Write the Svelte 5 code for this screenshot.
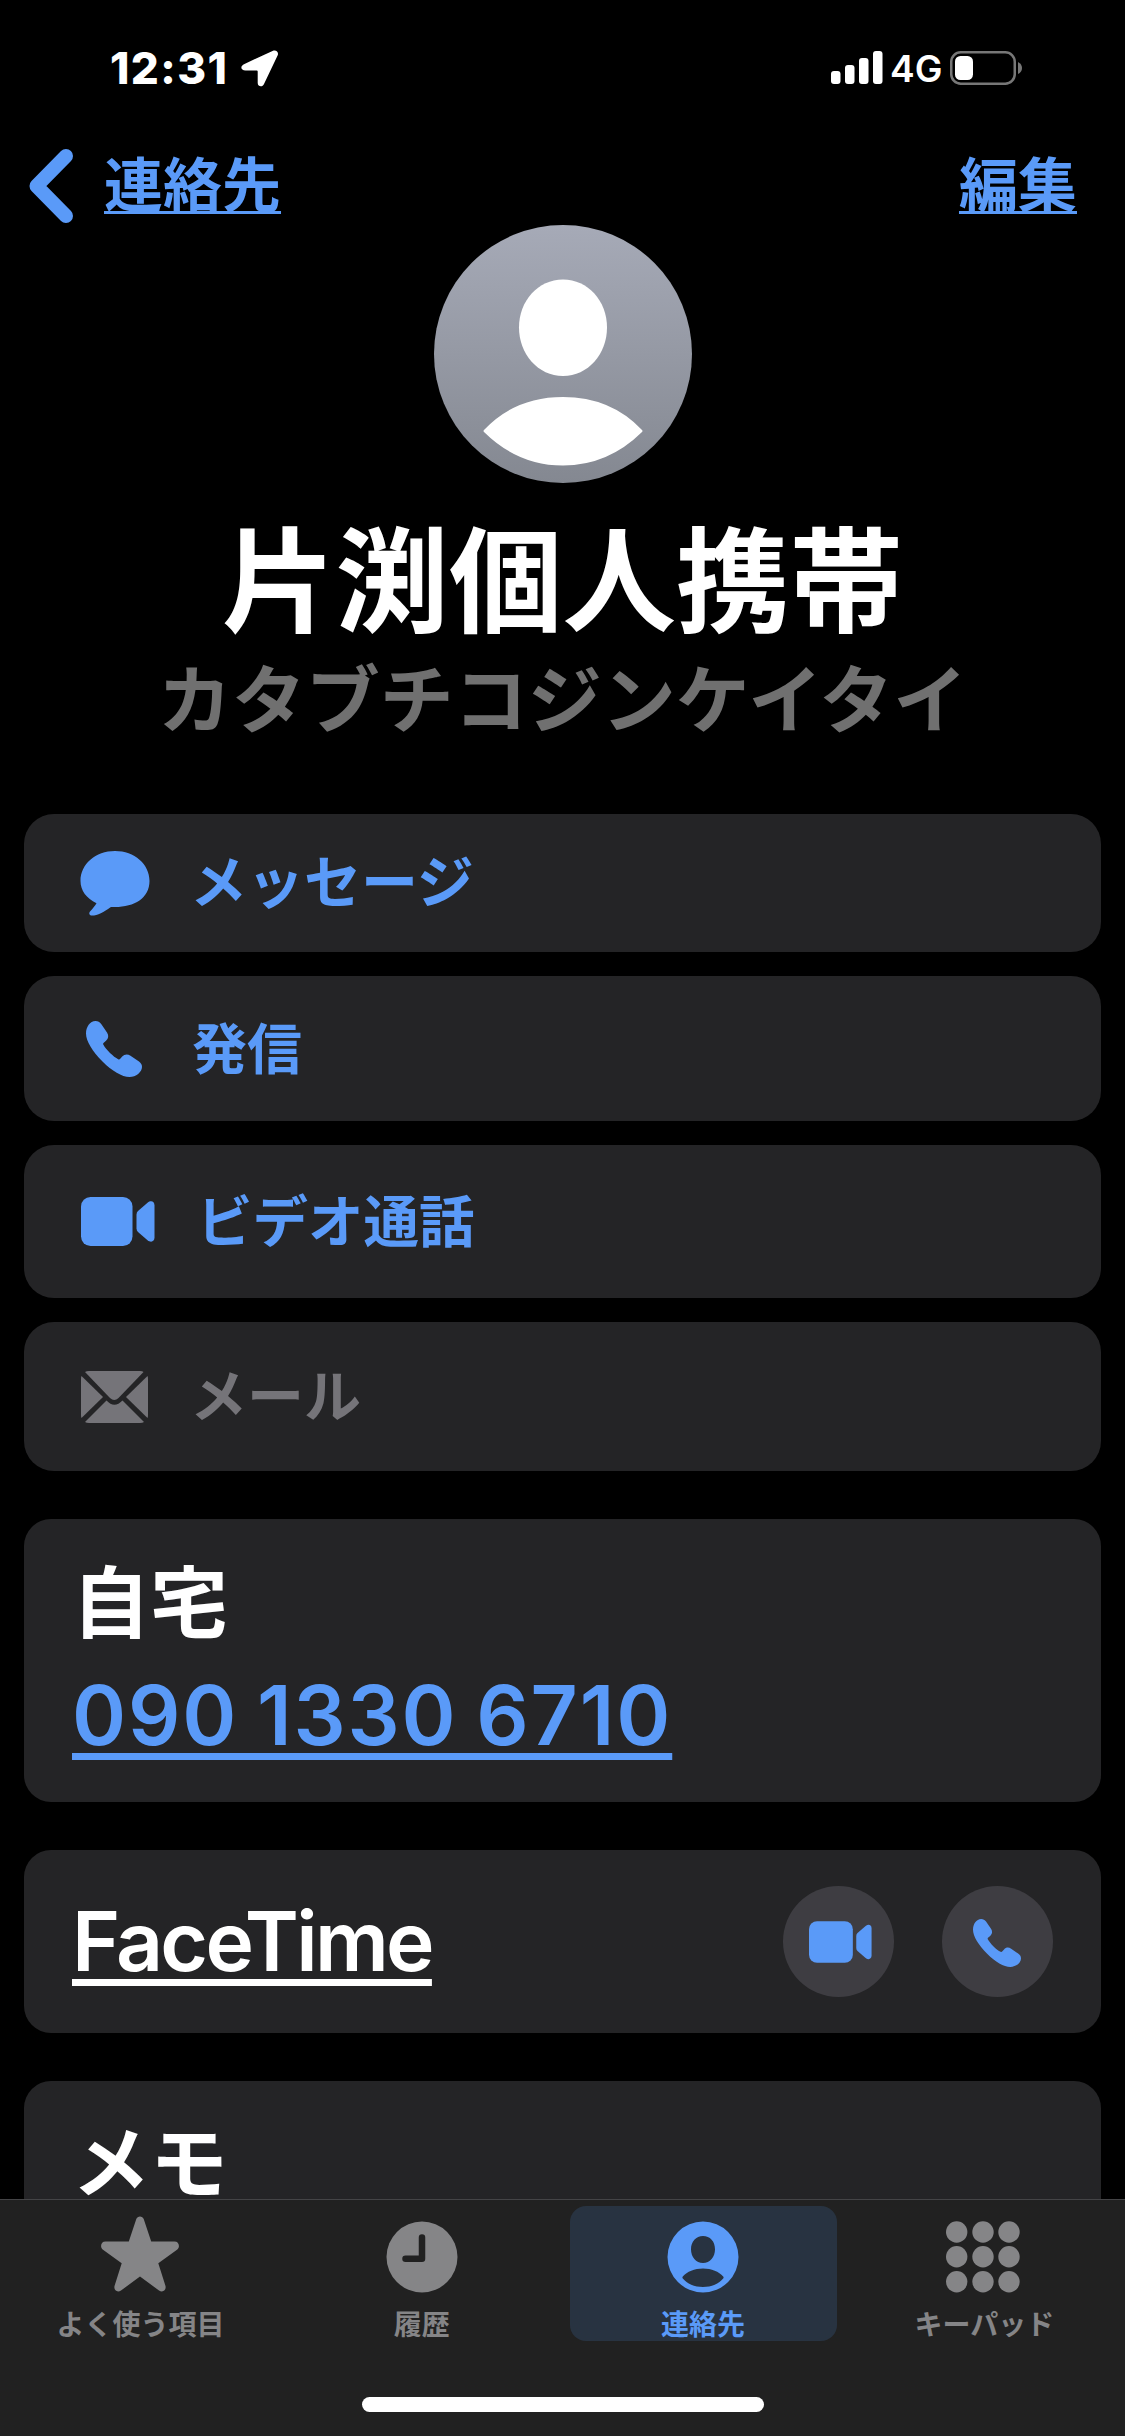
<script lang="ts">
  type IconName = 'message' | 'phone' | 'video' | 'mail' | 'star' | 'clock' | 'person' | 'keypad';

  interface Action {
    icon: IconName;
    label: string;
    disabled?: boolean;
  }

  interface Tab {
    icon: IconName;
    label: string;
  }

  const actions: Action[] = [
    { icon: 'message', label: 'メッセージ' },
    { icon: 'phone', label: '発信' },
    { icon: 'video', label: 'ビデオ通話' },
    { icon: 'mail', label: 'メール', disabled: true },
  ];

  const tabs: Tab[] = [
    { icon: 'star', label: 'よく使う項目' },
    { icon: 'clock', label: '履歴' },
    { icon: 'person', label: '連絡先' },
    { icon: 'keypad', label: 'キーパッド' },
  ];

  let current = $state('連絡先');
</script>

{#snippet icon(name: IconName)}
  {#if name === 'message'}
    <svg class="icon message" viewBox="0 0 70 65" aria-hidden="true">
      <path
        d="M35 0C54.500 0 69.500 13 69.500 30S54.500 56 35 56C33 56 31.500 56 30.500 56.200C24 61 17.500 64.500 12 64.500C9.500 64.500 8.500 62.500 10 60.500C12.500 57.500 15 55 16.500 52.200C6.500 47.500 0.500 39.500 0.500 30C0.500 13 15.500 0 35 0Z"
      />
    </svg>
  {:else if name === 'phone'}
    <svg class="icon phone" viewBox="0 0 56 56" aria-hidden="true">
      <path
        d="M9.500 0C12 0 13.800 1 15.200 3L21 11.500C23 14.500 22.500 17.500 20 19.800L17.500 22C17 22.500 17 23 17.400 23.800C20 28.500 27.500 36 32.200 38.200C33 38.600 33.500 38.500 34 38L36.200 35.600C38.500 33 41.500 32.700 44.500 34.700L53 40.600C55 42 56 43.800 56 46C56 51 50 56 43.500 56C36 56 26 50 16.500 40.500C6.500 30.500 0 20 0 12.500C0 6 4 0 9.500 0Z"
      />
    </svg>
  {:else if name === 'video'}
    <svg class="icon video" viewBox="0 0 74 49" aria-hidden="true">
      <rect width="51.500" height="49" rx="9.500" />
      <path
        d="M55.500 17.500Q55.500 15.300 57 14L66.500 5.800C70 3 73.500 4.500 73.500 8.500V40.500C73.500 44.500 70 46 66.500 43.200L57 35Q55.500 33.700 55.500 31.500Z"
      />
    </svg>
  {:else if name === 'mail'}
    <svg class="icon mail" viewBox="0 0 67 52" aria-hidden="true">
      <path d="M4 1Q5.500 0 8 0H59Q61.500 0 62.500 1L37.500 27Q33.300 31 29 27Z" />
      <path d="M0.500 5L22 26L0.500 47Q0 46 0 44V8Q0 6 0.500 5Z" />
      <path d="M66.500 5L45 26L66.500 47Q67 46 67 44V8Q67 6 66.500 5Z" />
      <path d="M4 51L25.500 29.500Q33.300 38 41.500 29.500L63 51Q61.500 52 59 52H8Q5.500 52 4 51Z" />
    </svg>
  {:else if name === 'star'}
    <svg class="icon star" viewBox="0 0 78 76" aria-hidden="true">
      <path
        d="M35.300 3C36.500-0.500 41.500-0.500 42.700 3L50.200 25.500H73.500C78 25.500 79.500 31 76 33.800L57.300 47.200L64.500 70C65.500 74.500 61.500 77 58 74.500L39 60.500L20 74.500C16.500 77 12.500 74.500 13.500 70L20.700 47.200L2 33.800C-1.500 31 0 25.500 4.500 25.500H27.800Z"
      />
    </svg>
  {:else if name === 'clock'}
    <svg class="icon" viewBox="0 0 72 72" aria-hidden="true">
      <circle cx="36" cy="36" r="35.500" />
      <path class="hands" d="M36 16.500V37.800H19.500" />
    </svg>
  {:else if name === 'person'}
    <svg class="icon" viewBox="0 0 72 72" aria-hidden="true">
      <path
        fill-rule="evenodd"
        d="M36 0.500A35.500 35.500 0 1 1 36 71.500A35.500 35.500 0 1 1 36 0.500ZM36 15C29 15 24 20.500 24 28.200S29 42 36 42S48 36 48 28.200S43 15 36 15ZM15.800 55.500Q15 56.500 15.800 57.500C20 62.500 27.500 66 36 66S52 62.500 56.200 57.500Q57 56.500 56.200 55.500C52 50.500 44.500 47.500 36 47.500S20 50.500 15.800 55.500Z"
      />
    </svg>
  {:else}
    <svg class="icon keypad" viewBox="0 0 74 72" aria-hidden="true">
      {#each [11, 35.7, 60.700] as cy}
        {#each [10.7, 37, 63] as cx}
          <circle {cx} {cy} r="10.700" />
        {/each}
      {/each}
    </svg>
  {/if}
{/snippet}

<div class="screen">
  <header>
    <div class="status">
      <div class="clock">
        <time>12:31</time>
        <svg width="38" height="37" viewBox="0 0 38 37" aria-hidden="true">
          <path
            d="M3.500 14L31.500 0.900C35-0.700 38 1.800 36.700 5.300L23 34C21.500 37.500 16.800 36.800 16.700 33V21.500Q16.700 20.600 15.800 20.600H4.500C-0.300 20.500-1.300 16 3.500 14Z"
          />
        </svg>
      </div>
      <div class="signals">
        <svg width="53" height="34" viewBox="0 0 53 34" aria-hidden="true">
          <rect y="20" width="9.500" height="13" rx="3" />
          <rect x="14" y="14" width="9.500" height="19" rx="3" />
          <rect x="28" y="7" width="9.500" height="26" rx="3" />
          <rect x="42" y="0" width="9.500" height="33" rx="3" />
        </svg>
        <span class="network">4G</span>
        <svg width="73" height="34" viewBox="0 0 73 34" aria-hidden="true">
          <rect class="shell" x="1.250" y="1.250" width="63.500" height="31.500" rx="9.500" />
          <rect x="5" y="5" width="18" height="24" rx="5.500" />
          <path class="nub" d="M68 11Q72 13 72 17T68 23Z" />
        </svg>
      </div>
    </div>

    <nav>
      <a class="back" href="#contacts">
        <svg width="46" height="76" viewBox="0 0 46 76" aria-hidden="true">
          <path d="M38 8L8.500 38L38 68" />
        </svg>
        <span>連絡先</span>
      </a>
      <a href="#edit"><span>編集</span></a>
    </nav>
  </header>

  <main>
    <section class="profile">
      <svg class="avatar" viewBox="0 0 258 258" aria-hidden="true">
        <defs>
          <linearGradient id="avatar-fill" x2="0" y2="1">
            <stop stop-color="#a6aab7" />
            <stop offset="1" stop-color="#848891" />
          </linearGradient>
        </defs>
        <circle cx="129" cy="129" r="129" fill="url(#avatar-fill)" />
        <path
          d="M129 54.500C154 54.500 173 76 173 102.500S154 151 129 151S85 129 85 102.500S104 54.500 129 54.500Z"
        />
        <path d="M50 205Q49 206 50 207Q84 240.500 129 240.500T208 207Q209 206 208 205Q177 172 129 172T50 205Z" />
      </svg>
      <h1>片渕個人携帯</h1>
      <p>カタブチコジンケイタイ</p>
    </section>

    <section class="actions">
      {#each actions as action}
        <button class="action {action.icon}-action" disabled={action.disabled}>
          {@render icon(action.icon)}
          <span>{action.label}</span>
        </button>
      {/each}
    </section>

    <section class="details">
      <div class="card number">
        <h2>自宅</h2>
        <a href="tel:09013306710">090 1330 6710</a>
      </div>
      <div class="card facetime">
        <span class="service">FaceTime</span>
        <div class="calls">
          <button aria-label="FaceTimeビデオ">{@render icon('video')}</button>
          <button aria-label="FaceTimeオーディオ">{@render icon('phone')}</button>
        </div>
      </div>
      <div class="card memo">
        <h2>メモ</h2>
      </div>
    </section>
  </main>

  <footer>
    <div class="tabs">
      {#each tabs as tab}
        <button
          class="tab"
          class:active={tab.label === current}
          onclick={() => (current = tab.label)}
        >
          {@render icon(tab.icon)}
          <span>{tab.label}</span>
        </button>
      {/each}
    </div>
    <div class="indicator"></div>
  </footer>
</div>

<style>
  :global(body) {
    background: #000;
  }

  .screen {
    --blue: #5a9af8;
    --card: #242426;

    display: flex;
    flex-direction: column;
    width: 1125px;
    height: 2436px;
    background: #000;
    color: #fff;
    font-family: Inter, 'Noto Sans CJK JP', sans-serif;
  }

  svg {
    display: block;
    flex: none;
    fill: currentColor;
  }

  h1,
  h2,
  p {
    margin: 0;
  }

  button {
    padding: 0;
    border: 0;
    color: inherit;
    font: inherit;
  }

  a {
    color: var(--blue);
    text-decoration: none;
  }

  .status {
    display: flex;
    justify-content: space-between;
    height: 136px;
    padding: 0 102px 8px 110px;
  }

  .clock,
  .signals {
    display: flex;
    align-items: center;
  }

  .clock {
    gap: 13px;
  }

  time {
    width: 118px;
    font-size: 44px;
    font-weight: 800;
    letter-spacing: 1.4px;
    white-space: nowrap;
  }

  .network {
    width: 60px;
    padding-left: 6px;
    font-size: 37px;
    font-weight: 600;
    line-height: 38px;
    padding-top: 2px;
    white-space: nowrap;
  }

  .shell {
    fill: none;
    stroke: #777;
    stroke-width: 2.5;
  }

  .nub {
    fill: #777;
  }

  nav {
    display: flex;
    align-items: center;
    justify-content: space-between;
    height: 79px;
    padding: 2px 48px 0 28px;
    font-size: 59px;
    font-weight: 700;
    line-height: 70px;
  }

  nav span {
    text-decoration: underline 3px;
    text-decoration-skip-ink: none;
    text-underline-offset: 4px;
  }

  .back {
    display: flex;
    align-items: center;
    gap: 30px;
  }

  .back path {
    fill: none;
    stroke: var(--blue);
    stroke-width: 14;
    stroke-linecap: round;
    stroke-linejoin: round;
  }

  main {
    flex: 1;
    min-height: 0;
  }

  .profile {
    display: flex;
    flex-direction: column;
    align-items: center;
  }

  .avatar {
    width: 258px;
    height: 258px;
  }

  h1 {
    margin-top: 34px;
    font-size: 113.5px;
    font-weight: 700;
    line-height: 130px;
  }

  .profile p {
    margin-top: 8px;
    color: #707070;
    font-size: 74px;
    font-weight: 700;
    line-height: 90px;
  }

  .actions {
    display: flex;
    flex-direction: column;
    gap: 24px;
    margin: 69px 24px 0;
  }

  .action {
    display: flex;
    align-items: center;
    gap: 44px;
    height: 138px;
    padding-left: 57px;
    border-radius: 30px;
    background: var(--card);
    color: var(--blue);
    font-size: 55px;
    font-weight: 700;
    line-height: 66px;
  }

  .action:disabled {
    color: #757479;
  }

  .message-action,
  .mail-action {
    gap: 42px;
    font-size: 57px;
  }

  .phone-action {
    height: 145px;
  }

  .video-action {
    gap: 42px;
    height: 153px;
    font-size: 55.5px;
  }

  .mail-action {
    height: 149px;
  }

  .message {
    width: 70px;
    height: 65px;
    margin: 0 -2px 0 -1px;
  }

  .phone {
    width: 56px;
    height: 56px;
  }

  .action .phone {
    margin: 0 6px 0 5px;
  }

  .video {
    width: 74px;
    height: 49px;
  }

  .mail {
    width: 67px;
    height: 52px;
  }

  .details {
    display: flex;
    flex-direction: column;
    gap: 48px;
    margin: 48px 24px 0;
  }

  .card {
    box-sizing: border-box;
    padding: 39px 48px;
    border-radius: 27px;
    background: var(--card);
  }

  h2 {
    font-size: 78px;
    font-weight: 700;
    line-height: 90px;
  }

  .number {
    display: flex;
    flex-direction: column;
    align-items: flex-start;
    gap: 22px;
    height: 283px;
    padding-top: 40px;
  }

  .number a,
  .service {
    font-size: 82px;
    font-weight: 600;
    line-height: 90px;
    text-decoration: underline 7px;
    text-decoration-skip-ink: none;
    text-underline-offset: 8px;
  }

  .number a {
    letter-spacing: 1.9px;
    word-spacing: -4px;
  }

  .facetime {
    display: flex;
    align-items: center;
    justify-content: space-between;
    height: 183px;
  }

  .service {
    letter-spacing: -2.7px;
  }

  .calls {
    display: flex;
    gap: 48px;
  }

  .calls button {
    display: grid;
    place-items: center;
    width: 111px;
    height: 111px;
    border-radius: 50%;
    background: #3e3d42;
    color: var(--blue);
  }

  .calls .video {
    width: 63px;
    height: 42px;
    margin-left: 4px;
  }

  .calls .phone {
    width: 48px;
    height: 48px;
    margin: 2px 0 0 -1px;
  }

  /* runs into the tab bar, so only the top corners are round */
  .memo {
    height: 118px;
    padding: 48px 48px 0;
    border-radius: 27px 27px 0 0;
  }

  .memo h2 {
    line-height: 70px;
  }

  footer {
    box-sizing: border-box;
    height: 237px;
    border-top: 1px solid #444446;
    background: #212121;
  }

  .tabs {
    display: grid;
    grid-template-columns: repeat(4, 1fr);
    padding-top: 6px;
  }

  .tab {
    display: flex;
    flex-direction: column;
    align-items: center;
    gap: 12px;
    box-sizing: border-box;
    width: 267px;
    height: 135px;
    margin: 0 auto;
    padding-top: 15px;
    border-radius: 16px;
    background: none;
    color: #858587;
    font-size: 28px;
    font-weight: 700;
    line-height: 40px;
  }

  .tab .icon {
    width: 72px;
    height: 72px;
  }

  .tab .star {
    width: 78px;
    height: 76px;
    margin: -5px 1px 1px 0;
  }

  .tab .keypad {
    width: 74px;
    margin-right: 3px;
  }

  .tab.active {
    background: #283341;
    color: var(--blue);
  }

  .hands {
    fill: none;
    stroke: #212121;
    stroke-width: 6.5;
    stroke-linecap: round;
    stroke-linejoin: round;
  }

  .indicator {
    width: 402px;
    height: 15px;
    margin: 56px auto 0;
    border-radius: 8px;
    background: #fff;
  }
</style>
